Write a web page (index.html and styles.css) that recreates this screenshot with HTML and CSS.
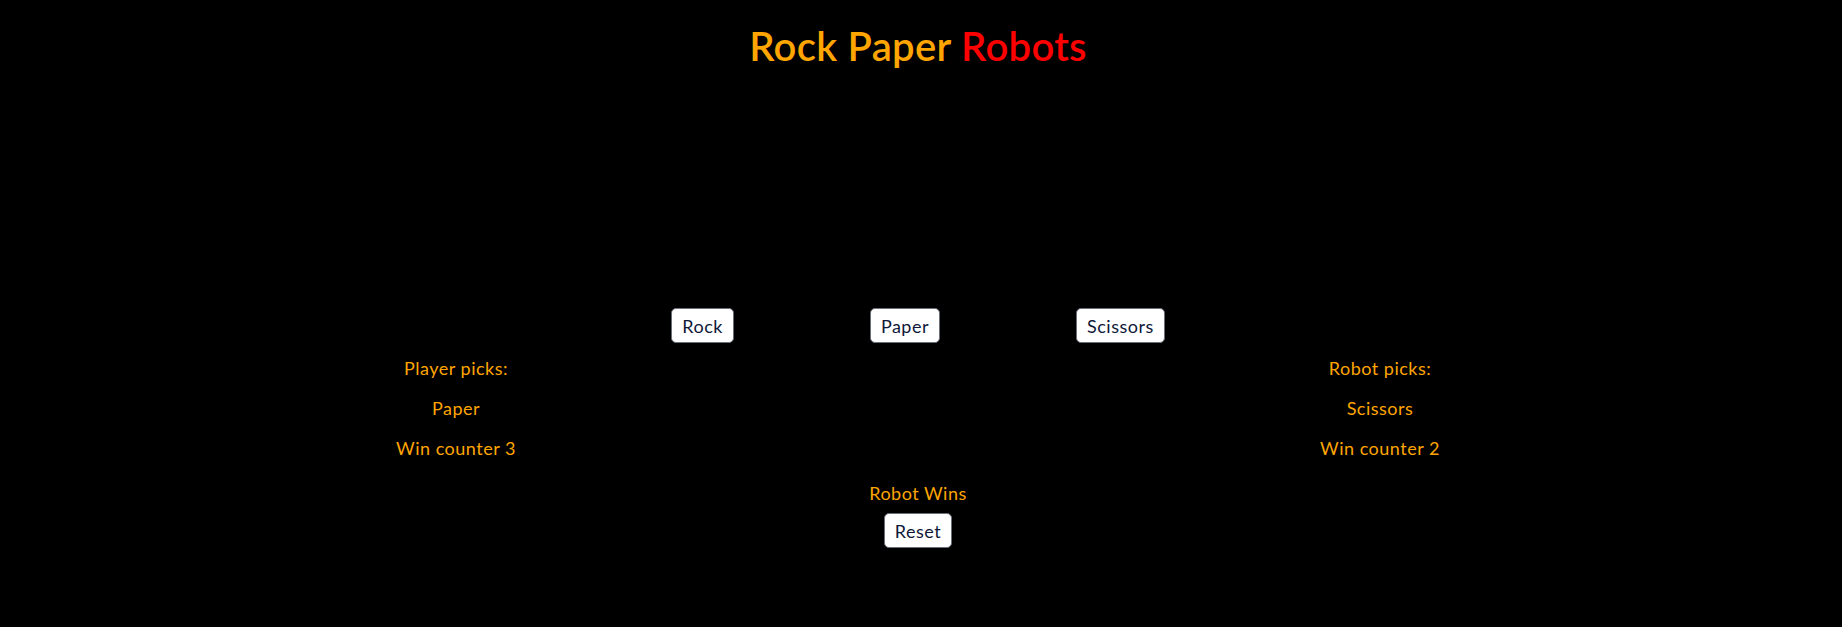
FILE: index.html
```html
<!DOCTYPE html>
<html>
<head>
<meta charset="utf-8">
<link rel="stylesheet" href="styles.css">
</head>
<body>
<h1 class="title">Rock Paper <span class="red">Robots</span></h1>
<div class="choices">
  <button class="btn">Rock</button>
  <button class="btn">Paper</button>
  <button class="btn">Scissors</button>
</div>
<div class="results">
  <div class="col">
    <p>Player picks:</p>
    <p>Paper</p>
    <p>Win counter 3</p>
  </div>
  <div class="col">
    <p>Robot picks:</p>
    <p>Scissors</p>
    <p>Win counter 2</p>
  </div>
</div>
<div class="outcome">
  <p>Robot Wins</p>
  <button class="btn">Reset</button>
</div>
</body>
</html>
```
FILE: styles.css
```css
html, body {
  margin: 0;
  background: #000;
  font-family: "Lato", "DejaVu Sans", sans-serif;
  color: #ffa500;
}
.title {
  margin: 0;
  padding-top: 22px;
  padding-right: 6px;
  text-align: center;
  font-size: 40px;
  font-weight: 600;
  letter-spacing: 0.3px;
  line-height: 48px;
  color: #ffa500;
}
.red { color: #ff0000; }
.choices {
  display: flex;
  justify-content: center;
  gap: 136px;
  padding-right: 6px;
  margin-top: 238px;
}
.btn {
  font-family: inherit;
  font-size: 18px;
  letter-spacing: 0.5px;
  color: #0e1838;
  background: #fff;
  border: 1px solid #6b6f7a;
  border-radius: 5px;
  height: 35px;
  padding: 0 10px;
}
.results {
  display: flex;
  justify-content: space-between;
  padding: 0 312px 0 306px;
  margin-top: 5px;
}
.col {
  width: 300px;
  text-align: center;
  font-size: 18px;
  letter-spacing: 0.5px;
}
.col p {
  margin: 0;
  line-height: 40px;
}
.outcome {
  display: flex;
  flex-direction: column;
  align-items: center;
  padding-right: 6px;
  margin-top: 5px;
  font-size: 18px;
  letter-spacing: 0.5px;
}
.outcome p { margin: 0; line-height: 40px; }
```
